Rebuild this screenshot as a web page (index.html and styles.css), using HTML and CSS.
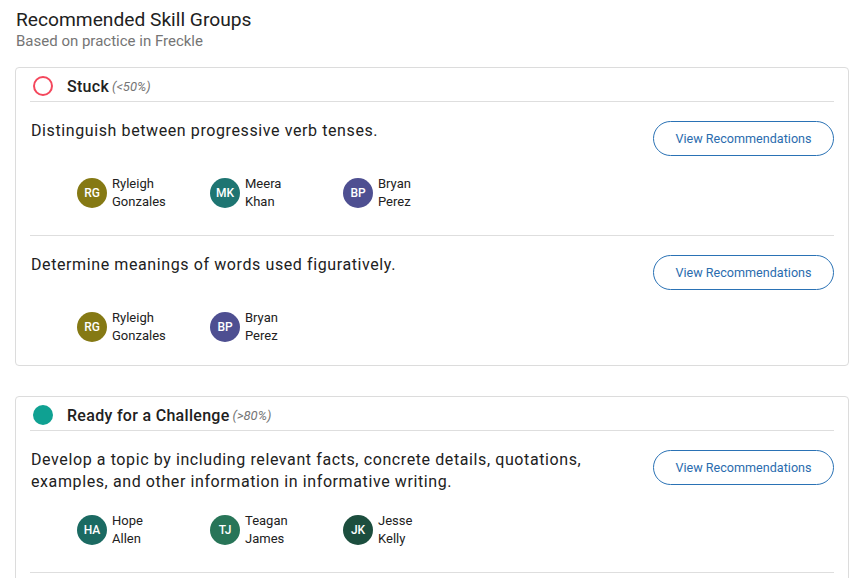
FILE: index.html
```html
<!DOCTYPE html>
<html>
<head>
<meta charset="utf-8">
<link rel="stylesheet" href="styles.css">
</head>
<body>
<div class="page">
  <h1 class="title">Recommended Skill Groups</h1>
  <div class="subtitle">Based on practice in Freckle</div>

  <section class="card">
    <div class="card-head">
      <span class="dot dot-stuck"></span>
      <span class="group-name">Stuck</span>
      <span class="group-range">(&lt;50%)</span>
    </div>
    <div class="row">
      <div class="row-top">
        <div class="skill">Distinguish between progressive verb tenses.</div>
        <button class="btn">View Recommendations</button>
      </div>
      <div class="students">
        <div class="student"><span class="avatar c-rg">RG</span><span class="name">Ryleigh<br>Gonzales</span></div>
        <div class="student"><span class="avatar c-mk">MK</span><span class="name">Meera<br>Khan</span></div>
        <div class="student"><span class="avatar c-bp">BP</span><span class="name">Bryan<br>Perez</span></div>
      </div>
    </div>
    <div class="row row-last">
      <div class="row-top">
        <div class="skill">Determine meanings of words used figuratively.</div>
        <button class="btn">View Recommendations</button>
      </div>
      <div class="students">
        <div class="student"><span class="avatar c-rg">RG</span><span class="name">Ryleigh<br>Gonzales</span></div>
        <div class="student"><span class="avatar c-bp">BP</span><span class="name">Bryan<br>Perez</span></div>
      </div>
    </div>
  </section>

  <section class="card">
    <div class="card-head">
      <span class="dot dot-ready"></span>
      <span class="group-name">Ready for a Challenge</span>
      <span class="group-range">(&gt;80%)</span>
    </div>
    <div class="row">
      <div class="row-top">
        <div class="skill">Develop a topic by including relevant facts, concrete details, quotations, examples, and other information in informative writing.</div>
        <button class="btn">View Recommendations</button>
      </div>
      <div class="students">
        <div class="student"><span class="avatar c-ha">HA</span><span class="name">Hope<br>Allen</span></div>
        <div class="student"><span class="avatar c-tj">TJ</span><span class="name">Teagan<br>James</span></div>
        <div class="student"><span class="avatar c-jk">JK</span><span class="name">Jesse<br>Kelly</span></div>
      </div>
    </div>
    <div class="row row-last row-empty"></div>
  </section>
</div>
</body>
</html>
```

FILE: styles.css
```css
html, body {
  margin: 0;
  padding: 0;
  background: #ffffff;
}
body {
  font-family: Roboto, "Liberation Sans", Arial, sans-serif;
  color: #212121;
}
.page {
  padding: 8px 13px 0 15px;
}
.title {
  margin: 0 0 0 1px;
  font-size: 19.2px;
  font-weight: 400;
  line-height: 24px;
  color: #212121;
}
.subtitle {
  margin: 0 0 0 1px;
  font-size: 15px;
  line-height: 18px;
  color: #757575;
}
.card {
  margin-top: 17px;
  border: 1px solid #dcdcdc;
  border-radius: 4px;
  padding: 0 14px;
  margin-bottom: 30px;
}
.card + .card {
  margin-top: 0;
}
.card-head {
  display: flex;
  align-items: center;
  height: 30px;
  padding-top: 3px;
  border-bottom: 1px solid #dedede;
  padding-left: 3px;
}
.dot {
  width: 20px;
  height: 20px;
  border-radius: 50%;
  box-sizing: border-box;
  margin-right: 14px;
  flex: none;
}
.dot-stuck {
  border: 2px solid #f4475c;
  background: #fff;
}
.dot-ready {
  background: #0fa192;
}
.group-name {
  font-size: 16px;
  font-weight: 500;
  letter-spacing: 0.3px;
  color: #212121;
}
.group-range {
  font-size: 13px;
  font-style: italic;
  color: #757575;
  margin-left: 3px;
  margin-top: 1px;
}
.row {
  padding: 18px 0 24px 1px;
  border-bottom: 1px solid #dedede;
}
.row-last {
  border-bottom: none;
  padding-bottom: 20px;
}
.row-empty {
  height: 60px;
  padding: 0;
}
.row-top {
  display: flex;
  justify-content: space-between;
  align-items: flex-start;
}
.skill {
  font-size: 16px;
  line-height: 22px;
  letter-spacing: 0.6px;
  color: #212121;
  max-width: 590px;
}
.btn {
  flex: none;
  margin-top: 1px;
  width: 181px;
  height: 35px;
  border: 1px solid #2a72b5;
  border-radius: 18px;
  background: #fff;
  color: #2a6cae;
  font-family: Roboto, "Liberation Sans", Arial, sans-serif;
  font-size: 12.6px;
  padding: 0;
}
.students {
  display: flex;
  margin-top: 19px;
  padding-left: 46px;
}
.student {
  display: flex;
  align-items: center;
  width: 133px;
}
.avatar {
  width: 30px;
  height: 30px;
  border-radius: 50%;
  color: #fff;
  font-size: 12px;
  font-weight: 500;
  display: flex;
  align-items: center;
  justify-content: center;
  margin-right: 5px;
  flex: none;
}
.name {
  font-size: 13px;
  line-height: 18px;
  color: #212121;
}
.c-rg { background: #857914; }
.c-mk { background: #1e7572; }
.c-bp { background: #4e4f91; }
.c-ha { background: #1b6a62; }
.c-tj { background: #287558; }
.c-jk { background: #1c4e3e; }
```
